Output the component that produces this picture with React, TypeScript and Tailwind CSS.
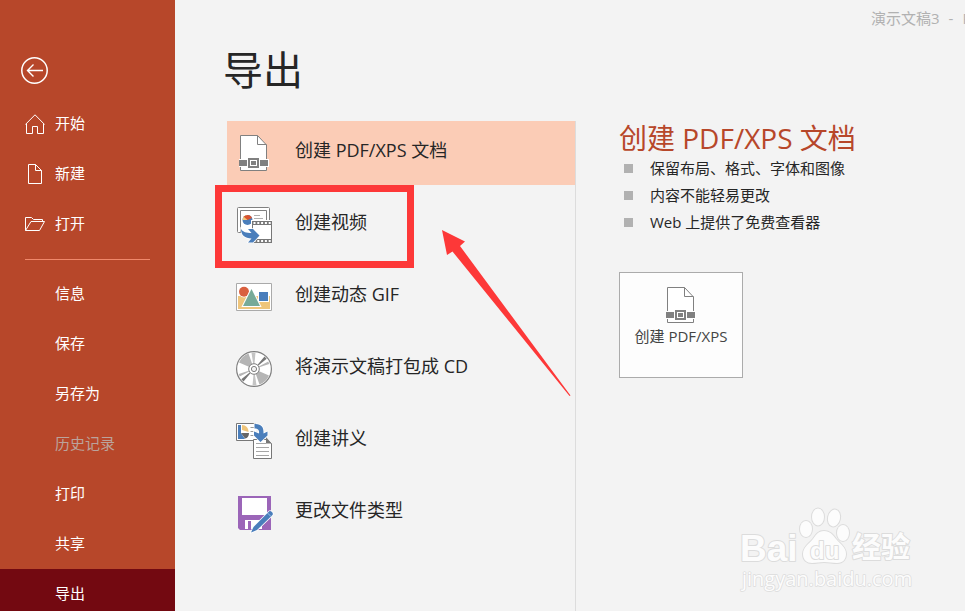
import { useState } from "react";
import type { ReactNode } from "react";
import clsx from "clsx";

interface NavItem {
  label: string;
  icon?: ReactNode;
  disabled?: boolean;
}

interface ExportOption {
  label: string;
  icon: ReactNode;
  marked?: boolean;
}

function BackIcon() {
  return (
    <svg className="h-7 w-7" viewBox="0 0 28 28" fill="none" stroke="white" aria-hidden="true">
      <circle cx="14.5" cy="14.5" r="12.7" strokeWidth="1.5" />
      <path d="M23 14.5H7.5M13.5 8.5l-6 6 6 6" strokeWidth="1.4" />
    </svg>
  );
}

function HomeIcon() {
  return (
    <svg className="h-5 w-5" viewBox="0 0 20 20" fill="none" stroke="white" aria-hidden="true">
      <path d="M.4 10.5 10 .8l9.6 9.7M1.5 9.8v9.7h6v-7h5v7h6V9.8" />
    </svg>
  );
}

function NewIcon() {
  return (
    <svg className="h-5 w-5" viewBox="0 0 20 20" fill="none" stroke="white" aria-hidden="true">
      <path d="M3.5.5h7l6 6v13h-13zM10.5.5v6h6" />
    </svg>
  );
}

function OpenIcon() {
  return (
    <svg className="h-5 w-5" viewBox="0 0 20 20" fill="none" stroke="white" aria-hidden="true">
      <path d="M.5 16.5v-13h6l2 2h9v2M.5 16.5l5.5-9h13.5l-5 9z" />
    </svg>
  );
}

function PdfIcon() {
  return (
    <svg className="h-9 w-9 shrink-0" viewBox="0 0 36 36" aria-hidden="true">
      <path d="M4.5.5h17l9 9.5v25.5h-26z" fill="#fff" stroke="#808080" />
      <path d="M21.5.5v9h9" fill="none" stroke="#808080" />
      <path d="M3 24h30v8H3z" fill="#fff" />
      <path d="M3 25h8v6H3zM24 25h8v6h-8z" fill="#808080" />
      <path d="M11 22h13v12H11z" fill="#fff" />
      <path d="M13 24h9v8h-9z" fill="#fff" stroke="#808080" strokeWidth="2" />
      <path d="M15 26h5v4h-5z" fill="#808080" />
    </svg>
  );
}

function VideoIcon() {
  return (
    <svg className="h-9 w-9 shrink-0" viewBox="0 0 36 36" aria-hidden="true">
      <rect x="1.5" y=".5" width="32" height="25" rx="1" fill="#fff" stroke="#808080" />
      <path d="M4.5 25V3.5h26V16" fill="none" stroke="#808080" />
      <path d="M18 8.5h6M18 11.5h9" stroke="#b0b0b0" />
      <circle cx="11.5" cy="13" r="5" fill="#4a7ebb" />
      <path d="M11.5 13h-5a5 5 0 0 1 5-5z" fill="#efc57b" />
      <path d="M11.5 13 7.5 9.5 11.5 8a5 5 0 0 1 4.500 3z" fill="#d9532f" />
      <path d="M15 13h21v23H15z" fill="#fff" />
      <path d="M16 14h20v22H16z" fill="#777" />
      <path d="M17 18h18v14H17z" fill="#fff" />
      <path d="M17.5 16H35M17.5 34H35" stroke="#fff" strokeWidth="2" strokeDasharray="2 1.8" />
      <path
        d="M5 22c2 3 5 4 10.500 4L12 22h5l6.500 6.500-6.500 7h-5l3.500-4C9 31.500 5 28 5 22z"
        fill="#4a7ebb"
        stroke="#fff"
        strokeWidth="1.5"
        paintOrder="stroke"
      />
    </svg>
  );
}

function GifIcon() {
  return (
    <svg className="h-9 w-9 shrink-0" viewBox="0 0 36 36" aria-hidden="true">
      <path d="M.5 4.5h35v27H.5z" fill="#fff" stroke="#aaa" />
      <path d="M2 17h32v13H2z" fill="#efc57b" />
      <circle cx="8" cy="12.7" r="5" fill="#d9603f" stroke="#fff" strokeWidth="1.5" paintOrder="stroke" />
      <path d="M23 13h9v9h-9z" fill="#4a7ebb" stroke="#fff" strokeWidth="2" paintOrder="stroke" />
      <path d="M15.5 10 24 27H7z" fill="#77aa98" stroke="#fff" strokeWidth="2" paintOrder="stroke" />
    </svg>
  );
}

function DiscIcon() {
  return (
    <svg className="h-9 w-9 shrink-0" viewBox="0 0 36 36" aria-hidden="true">
      <circle cx="18" cy="18" r="17.4" fill="#fff" stroke="#808080" strokeWidth="1.2" />
      <path d="M18 18 3 11.5A16.5 16.5 0 0 1 12.5 2.500zM18 18l15 6.500a16.5 16.5 0 0 1-9.500 9z" fill="#b5b5b5" />
      <path d="M18 18 15.5 1.700A16.5 16.5 0 0 1 19.5 1.500zM18 18l2.500 16.300a16.5 16.5 0 0 1-4 .2z" fill="#c4c4c4" />
      <path d="m18 18 10.5-12.500 2.200 2.200zM18 18 7.5 30.500 5.300 28.300z" fill="#777" />
      <path d="m18 18 14.3-7.500.9 2.500zM18 18 3.700 25.500 2.800 23z" fill="#b5b5b5" />
      <circle cx="18" cy="18" r="5.3" fill="#fff" stroke="#808080" />
      <circle cx="18" cy="18" r="2.6" fill="#f3f3f3" stroke="#808080" />
    </svg>
  );
}

function HandoutIcon() {
  return (
    <svg className="h-9 w-9 shrink-0" viewBox="0 0 36 36" aria-hidden="true">
      <path d="M20 17.5H.5V.5H20" fill="#fff" stroke="#777" />
      <path d="M2 2h3v8l4 6H2z" fill="#4a7ebb" />
      <path d="M6 2c4 0 6.500 3 6.500 7L6 7z" fill="#efc57b" />
      <path d="M5 10h8a4.500 5.500 0 0 1-4 5.500z" fill="#666" />
      <path d="M14.5 4.500H18M14.5 8.500H18M14.5 12.500H18" stroke="#999" />
      <path d="M17.5 16.500h13l5 4v15h-18z" fill="#fff" stroke="#777" />
      <path d="M30 14v6.500h5.500z" fill="#777" />
      <path d="M20 20.500h10M20 24.500h13M20 28.500h13M20 32.500h13" stroke="#a6a6a6" />
      <path
        d="M18.5 1c6.500-.5 9.500 3 9 9.500l4-2v4l-7 6.500-6.500-6.500v-4l5 2c.5-3.500-1-5-4.500-5z"
        fill="#4a7ebb"
        stroke="#fff"
        strokeWidth="1.5"
        paintOrder="stroke"
      />
    </svg>
  );
}

function FileTypeIcon() {
  return (
    <svg className="h-9 w-9 shrink-0 overflow-visible" viewBox="0 0 36 36" aria-hidden="true">
      <path d="M2 1h33v34H4l-2-2z" fill="#9b65b8" />
      <path d="M6 3h25v17H6zM9 25h17v9H9z" fill="#fff" />
      <path d="M12 26h3v8h-3z" fill="#9b65b8" />
      <path
        d="M15 37.5 17.5 32 33 16.500c1.500-1.500 5 1.500 3.500 3.500L21 35z"
        fill="#4a7ebb"
        stroke="#fff"
        strokeWidth="1.5"
        paintOrder="stroke"
      />
      <path d="m31.5 18 3.500 3.500" stroke="#9fc0e3" />
    </svg>
  );
}

function BaiduMark() {
  return (
    <svg
      className="absolute right-12 bottom-4 h-[90px] w-[182px]"
      viewBox="0 0 182 90"
      fill="#fcfcfc"
      stroke="#dcdcdc"
      strokeWidth="2"
      paintOrder="stroke"
      strokeLinejoin="round"
      role="img"
      aria-label="Baidu"
    >
      <text x="5" y="56" className="font-['Liberation_Sans'] text-[37px] font-bold">Bai</text>
      <ellipse cx="71" cy="24" rx="6" ry="8" />
      <ellipse cx="83" cy="12" rx="6" ry="8.5" />
      <ellipse cx="99" cy="13" rx="6" ry="8.5" transform="rotate(12 99 13)" />
      <ellipse cx="108" cy="28" rx="6" ry="8" />
      <path d="M89 26c-6 0-8 4-11 8-4 5-10 8-10 15 0 6 4 9 9 9s7-1 12-1 8 1 13 1c6 0 9-4 9-9 0-7-6-10-10-15-3-4-6-8-12-8z" />
      <text x="75" y="54" className="font-['Liberation_Sans'] text-[24px] font-bold">du</text>
      <text x="117" y="53" className="font-['Noto_Sans_CJK_SC'] text-[29px] font-bold">经验</text>
      <text x="7" y="81" strokeWidth="1.5" className="font-['Open_Sans'] text-[20px]">jingyan.baidu.com</text>
    </svg>
  );
}

const primaryNav: NavItem[] = [
  { label: "开始", icon: <HomeIcon /> },
  { label: "新建", icon: <NewIcon /> },
  { label: "打开", icon: <OpenIcon /> },
];

const fileNav: NavItem[] = [
  { label: "信息" },
  { label: "保存" },
  { label: "另存为" },
  { label: "历史记录", disabled: true },
  { label: "打印" },
  { label: "共享" },
  { label: "导出" },
];

const exportOptions: ExportOption[] = [
  { label: "创建 PDF/XPS 文档", icon: <PdfIcon /> },
  { label: "创建视频", icon: <VideoIcon />, marked: true },
  { label: "创建动态 GIF", icon: <GifIcon /> },
  { label: "将演示文稿打包成 CD", icon: <DiscIcon /> },
  { label: "创建讲义", icon: <HandoutIcon /> },
  { label: "更改文件类型", icon: <FileTypeIcon /> },
];

const features = ["保留布局、格式、字体和图像", "内容不能轻易更改", "Web 上提供了免费查看器"];

function Sidebar() {
  const [active, setActive] = useState("导出");

  const renderItem = (item: NavItem) => (
    <button
      key={item.label}
      disabled={item.disabled}
      onClick={() => setActive(item.label)}
      className={clsx(
        "flex h-[50px] w-full shrink-0 items-center gap-[10px] pl-[25px] text-left text-[15px]",
        item.disabled ? "text-[#bba39c]" : "text-white",
        active === item.label && "bg-[#730911]"
      )}
    >
      <span className="h-5 w-5">{item.icon}</span>
      <span className="pb-0.5">{item.label}</span>
    </button>
  );

  return (
    <nav className="flex w-[175px] shrink-0 flex-col bg-[#b7472a]">
      <button className="mt-14 mb-[15px] ml-5 h-7 w-7 shrink-0" aria-label="返回">
        <BackIcon />
      </button>
      {primaryNav.map(renderItem)}
      <hr className="mx-[25px] mt-[10px] mb-[9px] border-[#f0886b]" />
      {fileNav.map(renderItem)}
    </nav>
  );
}

export default function App() {
  const [selected, setSelected] = useState(exportOptions[0].label);

  return (
    <div className="relative flex h-screen overflow-hidden bg-[#f3f3f3] font-['Open_Sans','Noto_Sans_CJK_SC',sans-serif] text-[#262626]">
      <Sidebar />

      <main className="flex min-w-0 flex-1 flex-col">
        {/* Window title */}
        <div className="flex h-9 shrink-0 justify-end">
          <p className="flex w-[94px] gap-[9px] overflow-hidden text-[15px] leading-9 whitespace-nowrap text-[#b1b1b1]">
            <span>演示文稿3</span>
            <span>-</span>
            <span>PowerPoint</span>
          </p>
        </div>
        <h1 className="mb-[17px] pl-12 text-[40px] leading-[68px]">导出</h1>

        <div className="flex min-h-0 flex-1 pl-[52px]">
          {/* Export options */}
          <section className="relative flex w-[349px] shrink-0 flex-col gap-2 border-r border-[#dcdcdc]">
            {exportOptions.map((option) => (
              <div key={option.label} className="relative">
                <button
                  onClick={() => setSelected(option.label)}
                  className={clsx(
                    "flex h-16 w-full items-center gap-[23px] pl-[9px] text-left text-lg",
                    selected === option.label && "bg-[#fbccb6]"
                  )}
                >
                  {option.icon}
                  <span className="pb-1.5">{option.label}</span>
                </button>
                {option.marked && (
                  <div className="pointer-events-none absolute -top-2 -left-3 h-[83px] w-[199px] border-[7px] border-[#fd3838]" />
                )}
              </div>
            ))}
            <svg
              className="pointer-events-none absolute top-[109px] left-[215px] h-[167px] w-[129px]"
              viewBox="0 0 129 167"
              aria-hidden="true"
            >
              <path d="M0 0 23 11.5 18 16 128.5 165.500 127.5 166 10.5 21.500 5 25z" fill="#fd3838" />
            </svg>
          </section>

          {/* Details of the selected option */}
          <section className="min-w-0 flex-1 pl-[43px]">
            <h2 className="text-[28px] leading-[34px] whitespace-nowrap text-[#b7472a]">创建 PDF/XPS 文档</h2>
            <ul className="text-[15px] leading-[27px]">
              {features.map((feature) => (
                <li key={feature} className="flex items-center gap-[17px] pl-[5px]">
                  <span className="h-[9px] w-[9px] bg-[#b1b1b1]" />
                  {feature}
                </li>
              ))}
            </ul>
            <button className="mt-9 flex h-[106px] w-[124px] flex-col items-center border border-[#ababab] bg-[#fdfdfd] pt-[14px] text-[15px] text-[#444]">
              <PdfIcon />
              <span className="leading-[26px]">创建 PDF/XPS</span>
            </button>
          </section>
        </div>
      </main>

      <BaiduMark />
    </div>
  );
}
